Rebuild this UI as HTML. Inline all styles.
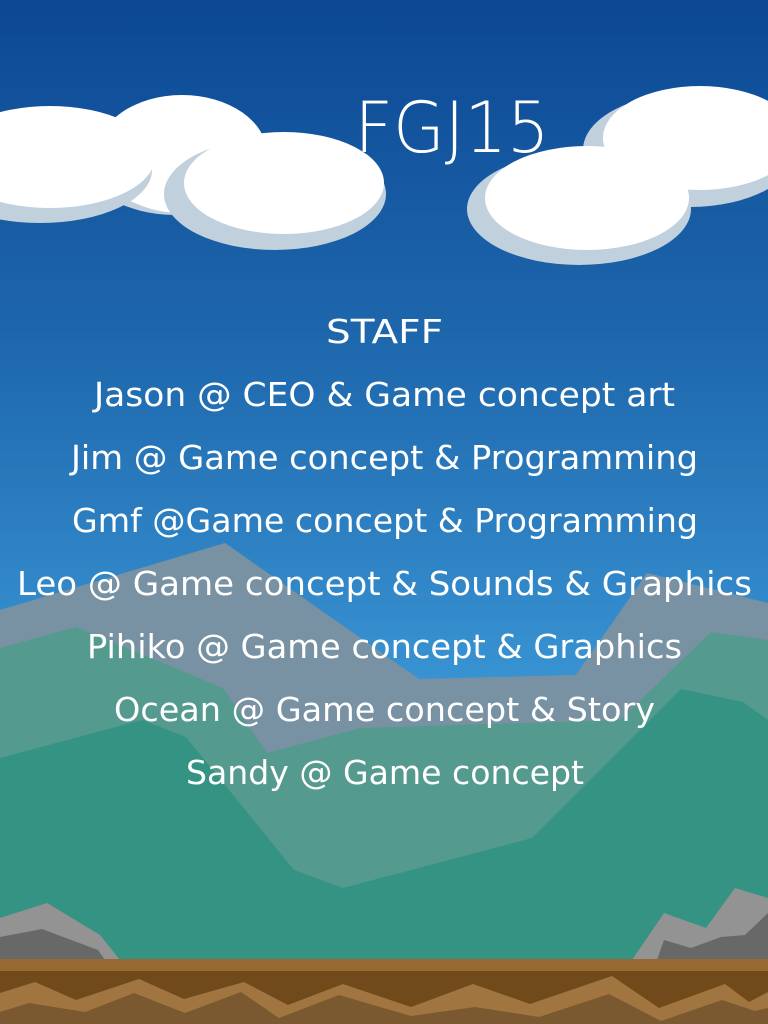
<!DOCTYPE html>
<html><head><meta charset="utf-8"><style>
html,body{margin:0;padding:0;width:768px;height:1024px;overflow:hidden}
svg{display:block}
</style></head><body>
<svg width="768" height="1024" viewBox="0 0 768 1024" xmlns="http://www.w3.org/2000/svg">
<defs>
<linearGradient id="sky" x1="0" y1="0" x2="0" y2="1">
<stop offset="0" stop-color="#0c4894"/>
<stop offset="0.35" stop-color="#1f69ae"/>
<stop offset="0.7" stop-color="#3b98d6"/>
<stop offset="1" stop-color="#45a8e2"/>
</linearGradient>
</defs>
<rect width="768" height="1024" fill="url(#sky)"/>
<polygon fill="#7892a4" points="0,610 225,543 419,679 576,675 647,573 768,603 768,1024 0,1024"/>
<polygon fill="#559a8e" points="0,648 76,627 223,688 267,753 360,728 620,720 711,632 768,640 768,1024 0,1024"/>
<polygon fill="#359383" points="0,758 142,720 186,737 294,870 343,888 532,838 681,689 743,702 768,720 768,1024 0,1024"/>
<polygon fill="#939393" points="0,918 47,903 100,935 120,960 0,960"/>
<polygon fill="#686868" points="0,937 42,929 98,950 105,960 0,960"/>
<polygon fill="#939393" points="632,960 664,913 706,928 735,888 768,898 768,960"/>
<polygon fill="#686868" points="657,960 664,940 691,948 721,937 745,935 768,913 768,960"/>
<rect y="959" width="768" height="65" fill="#714a1b"/>
<rect y="959" width="768" height="12" fill="#986a33"/>
<polygon fill="#a17540" points="0,993 35,982 76,1000 139,979 184,999 244,982 288,1005 343,984 411,1007 473,984 530,1004 612,976 659,1008 725,984 749,1002 768,992 768,1024 0,1024"/>
<polygon fill="#7a5830" points="0,1012 29,1003 85,1012 134,993 185,1013 241,992 279,1018 339,995 411,1016 475,1007 539,1017 609,994 661,1021 722,1000 755,1011 768,1008 768,1024 0,1024"/>
<!-- clouds left -->
<ellipse cx="176" cy="160" rx="92" ry="55" fill="#c0d0dc"/>
<ellipse cx="182" cy="154" rx="85" ry="59" fill="#fff"/>
<ellipse cx="40" cy="170" rx="112" ry="53" fill="#c0d0dc"/>
<ellipse cx="50" cy="157" rx="105" ry="51" fill="#fff"/>
<ellipse cx="275" cy="194" rx="111" ry="56" fill="#c0d0dc"/>
<ellipse cx="284" cy="183" rx="100" ry="51" fill="#fff"/>
<text x="452" y="152" fill="#fff" font-family="DejaVu Sans, Liberation Sans, sans-serif" font-weight="200" font-size="70" text-anchor="middle" textLength="195" lengthAdjust="spacingAndGlyphs">FGJ15</text>
<!-- clouds right -->
<ellipse cx="690" cy="150" rx="107" ry="57" fill="#c0d0dc"/>
<ellipse cx="700" cy="138" rx="97" ry="52" fill="#fff"/>
<ellipse cx="579" cy="209" rx="112" ry="56" fill="#c0d0dc"/>
<ellipse cx="587" cy="198" rx="102" ry="52" fill="#fff"/>
<g fill="#fff" font-family="DejaVu Sans, Liberation Sans, sans-serif" font-size="33">
<text x="326" y="343" textLength="117" lengthAdjust="spacingAndGlyphs">STAFF</text>
<text x="94" y="406" textLength="581" lengthAdjust="spacingAndGlyphs">Jason @ CEO &amp; Game concept art</text>
<text x="71" y="469" textLength="627" lengthAdjust="spacingAndGlyphs">Jim @ Game concept &amp; Programming</text>
<text x="72" y="532" textLength="626" lengthAdjust="spacingAndGlyphs">Gmf @Game concept &amp; Programming</text>
<text x="17" y="595" textLength="735" lengthAdjust="spacingAndGlyphs">Leo @ Game concept &amp; Sounds &amp; Graphics</text>
<text x="87" y="658" textLength="595" lengthAdjust="spacingAndGlyphs">Pihiko @ Game concept &amp; Graphics</text>
<text x="114" y="721" textLength="541" lengthAdjust="spacingAndGlyphs">Ocean @ Game concept &amp; Story</text>
<text x="186" y="784" textLength="398" lengthAdjust="spacingAndGlyphs">Sandy @ Game concept</text>
</g>
</svg>
</body></html>
